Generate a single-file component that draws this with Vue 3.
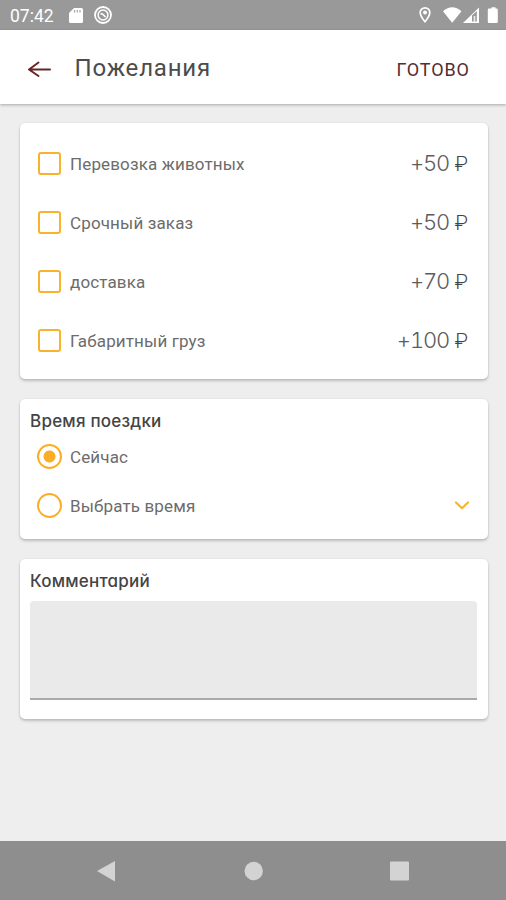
<script setup>
import { ref } from 'vue'

const wishes = ref([
  { label: 'Перевозка животных', price: '+50', checked: false },
  { label: 'Срочный заказ', price: '+50', checked: false },
  { label: 'доставка', price: '+70', checked: false },
  { label: 'Габаритный груз', price: '+100', checked: false },
])
const time = ref('now')
const comment = ref('')
</script>

<template>
  <div class="screen">
    <div class="status">
      <span class="clock">07:42</span>
      <svg class="sd" width="14" height="17" viewBox="0 0 14 17">
        <path d="M5 1h7.500Q14 1 14 2.500V14.500Q14 16 12.500 16H1.500Q0 16 0 14.500V6z" fill="#fff" />
        <path d="M5.500 3v2.500M8.300 3v2.500M11 3v2.500" stroke="#aaa" stroke-width="1.300" />
      </svg>
      <svg class="ring" width="20" height="20" viewBox="0 0 20 20" fill="none" stroke="#fff">
        <circle cx="10" cy="10" r="8" stroke-width="1.800" />
        <circle cx="10" cy="10" r="4.900" stroke-width="1.500" />
        <path d="M7.500 9.300q1.500-1 2.300 0l2.700 2.700" stroke-width="1.600" />
      </svg>
      <span class="grow"></span>
      <svg width="80" height="20" viewBox="0 0 80 20">
        <path d="M7 2.800a4.800 4.800 0 0 0-4.800 4.800C2.200 11.200 7 16.800 7 16.800s4.800-5.600 4.800-9.200A4.800 4.800 0 0 0 7 2.800z" fill="none" stroke="#fff" stroke-width="1.700" />
        <circle cx="7" cy="7.600" r="2" fill="#fff" />
        <path d="M25 6.200Q34 -1.500 43.500 6.200L34.200 17.800z" fill="#fff" />
        <path d="M45 18L61 2.500v15.500z" fill="#fff" />
        <path d="M54 10.500l4.800-4.500v10.500h-4.800z" fill="#999" />
        <path d="M56.500 11V17" stroke="#eee" stroke-width="1.600" />
        <path d="M71 3.500h2.500V2.200h4v1.300h1.100q1.200 0 1.200 1.200v12.100q0 1.200-1.200 1.200h-7.600q-1.200 0-1.200-1.200V4.700q0-1.200 1.200-1.200z" fill="#fff" />
      </svg>
    </div>

    <header class="bar">
      <svg class="back" width="24" height="18" viewBox="0 0 24 18" fill="none" stroke="#6a2424" stroke-width="2" stroke-linecap="round" stroke-linejoin="round">
        <path d="M23 9.500H2.500M11.500 2.500L2 9.500 11.500 16" />
      </svg>
      <h1>Пожелания</h1>
      <span class="grow"></span>
      <button class="done">ГОТОВО</button>
    </header>

    <main>
      <section class="card wishes">
        <label v-for="w in wishes" :key="w.label" class="wish">
          <input v-model="w.checked" type="checkbox" class="box" />
          <span class="label">{{ w.label }}</span>
          <span class="grow"></span>
          <span class="price">{{ w.price }}</span>
          <span class="currency">₽</span>
        </label>
      </section>

      <section class="card time">
        <h2>Время поездки</h2>
        <label class="option">
          <input v-model="time" type="radio" value="now" class="radio" />
          <span class="label">Сейчас</span>
        </label>
        <label class="option">
          <input v-model="time" type="radio" value="later" class="radio" />
          <span class="label">Выбрать время</span>
          <span class="grow"></span>
          <svg width="16" height="10" viewBox="0 0 16 10" fill="none" stroke="#f8b32b" stroke-width="2.200" stroke-linecap="round" stroke-linejoin="round">
            <path d="M2 1.500l6 5.700L14 1.500" />
          </svg>
        </label>
      </section>

      <section class="card comment">
        <h2>Комментарий</h2>
        <textarea v-model="comment"></textarea>
      </section>
    </main>

    <nav class="nav">
      <svg width="506" height="59" viewBox="0 0 506 59" fill="#d3d3d3">
        <path d="M97 30L115 20v20.500z" />
        <circle cx="253.700" cy="30" r="9.200" />
        <rect x="390" y="20.500" width="19" height="19" rx="1" />
      </svg>
    </nav>
  </div>
</template>

<style>
body {
  margin: 0;
  background: #eee;
}
</style>

<style scoped>
* {
  box-sizing: border-box;
}
.screen {
  width: 506px;
  height: 900px;
  display: flex;
  flex-direction: column;
  background: #eee;
  font-family: Roboto, "Noto Sans", sans-serif;
  overflow: hidden;
}
.grow {
  flex: 1;
}
.status {
  height: 30px;
  flex: none;
  display: flex;
  align-items: center;
  background: #999;
  padding: 0 8px 0 10px;
  color: #fff;
}
.clock {
  width: 59px;
  font-size: 17.500px;
  line-height: 20px;
  padding-top: 2px;
}
.ring {
  margin-left: 10px;
}
.bar {
  height: 74px;
  flex: none;
  display: flex;
  align-items: center;
  background: #fff;
  padding: 2px 37px 0 27px;
  box-shadow: 0 1px 3px rgba(0, 0, 0, 0.3);
  z-index: 1;
}
h1 {
  margin: 0 0 0 23.500px;
  font-size: 24px;
  line-height: 30px;
  font-weight: 400;
  letter-spacing: 0.800px;
  color: #4c4c4c;
}
.back {
  margin-top: 1px;
}
.done {
  border: 0;
  padding: 3px 0 0;
  background: none;
  font: 400 18px/24px Roboto, sans-serif;
  letter-spacing: 0.900px;
  margin-right: -0.900px;
  color: #562c30;
}
main {
  flex: 1;
  display: flex;
  flex-direction: column;
  gap: 20px;
  padding: 19px 18px 0 20px;
}
.card {
  background: #fff;
  border-radius: 5px;
  box-shadow: 0 2px 3px rgba(0, 0, 0, 0.2), 0 0 2px rgba(0, 0, 0, 0.1);
}
.wishes {
  height: 256px;
  padding: 11px 20px 0 18px;
}
.wish {
  height: 59px;
  display: flex;
  align-items: center;
}
.box {
  appearance: none;
  width: 23px;
  height: 23px;
  margin: 0;
  border: 2px solid #f9b22c;
  border-radius: 3px;
}
.label {
  margin-left: 9px;
  font-size: 17px;
  line-height: 22px;
  color: #6c6c6c;
  letter-spacing: 0.140px;
  white-space: nowrap;
}
.price {
  font-family: Inter, sans-serif;
  font-weight: 300;
  font-size: 22px;
  line-height: 26px;
  font-feature-settings: "tnum";
  letter-spacing: -1.200px;
  padding-bottom: 2px;
  color: #5c5c5c;
}
.currency {
  width: 12px;
  margin-left: 7px;
  font-weight: 300;
  font-size: 20.500px;
  line-height: 26px;
  display: flex;
  justify-content: flex-end;
  color: #444;
}
.time {
  height: 140px;
  padding: 11px 18px 0 10px;
}
h2 {
  margin: 0;
  font-family: Inter, sans-serif;
  font-feature-settings: "cv11";
  font-weight: 500;
  font-size: 17px;
  line-height: 22px;
  letter-spacing: 0.230px;
  color: #444;
}
.option {
  height: 49px;
  display: flex;
  align-items: center;
  padding-left: 7px;
}
.radio {
  appearance: none;
  width: 25px;
  height: 25px;
  margin: 0;
  border: 2px solid #fbae23;
  border-radius: 50%;
}
.radio:checked {
  background: radial-gradient(circle, #fbae23 5.600px, transparent 6.400px);
}
.option .label {
  margin-left: 8px;
}
.comment {
  height: 160px;
  padding: 11px 11px 0 10px;
}
textarea {
  display: block;
  width: 100%;
  height: 99px;
  margin-top: 9px;
  padding: 8px;
  resize: none;
  outline: 0;
  border: 0;
  border-bottom: 2px solid #aaa;
  border-radius: 4px 4px 0 0;
  background: #eaeaea;
}
.nav {
  height: 59px;
  flex: none;
  background: #8e8e8e;
}
.nav svg {
  display: block;
}
</style>
